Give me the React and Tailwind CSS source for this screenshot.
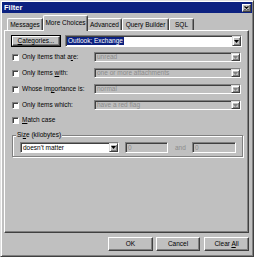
import React from "react";

function Arrow({ disabled }) {
  return (
    <div className="w-[9px] h-full shrink-0 flex items-center justify-center bg-[#c0c0c0] border border-t-[#dfdfdf] border-l-[#dfdfdf] border-r-[#404040] border-b-[#404040] shadow-[inset_1px_1px_0_#fff,inset_-1px_-1px_0_#808080]">
      <svg width="5" height="3" viewBox="0 0 5 3">
        <polygon points="0,0 5,0 2.5,3" fill={disabled ? "#808080" : "#000"} />
      </svg>
    </div>
  );
}

function Check() {
  return (
    <div className="w-[7px] h-[7px] shrink-0 bg-white border border-t-[#808080] border-l-[#808080] border-r-white border-b-white shadow-[inset_1px_1px_0_#404040]" />
  );
}

function Row({ label, value }) {
  return (
    <div className="flex items-center h-[10px]">
      <div className="ml-[1px]">
        <Check />
      </div>
      <div className="w-[72px] ml-[3px] whitespace-nowrap">{label}</div>
      <div className="w-[147px] h-[10px] flex bg-[#c0c0c0] border border-t-[#808080] border-l-[#808080] border-r-white border-b-white shadow-[inset_1px_1px_0_#404040]">
        <div className="flex-1 pl-[2px] flex items-center text-[#8c8c8c] whitespace-nowrap overflow-hidden">{value}</div>
        <Arrow disabled />
      </div>
    </div>
  );
}

export default function App() {
  const raised =
    "bg-[#c0c0c0] border border-t-white border-l-white border-r-[#404040] border-b-[#404040] shadow-[inset_-1px_-1px_0_#808080]";
  return (
    <div className="w-[254px] h-[257px] bg-[#c0c0c0] flex flex-col border border-t-[#dfdfdf] border-l-[#dfdfdf] border-r-[#404040] border-b-[#404040] shadow-[inset_1px_1px_0_#fff,inset_-1px_-1px_0_#808080] p-[1px] font-['Liberation_Sans',Arial,sans-serif] text-[6.5px] leading-[8px] text-black">
      {/* Title bar */}
      <div className="h-[11px] shrink-0 bg-[#0c2180] flex items-center justify-between pl-[2px] pr-[1px]">
        <span className="text-white font-bold text-[7.5px] leading-[9px]">Filter</span>
        <div className={`w-[9px] h-[8px] flex items-center justify-center ${raised}`}>
          <svg width="5" height="4" viewBox="0 0 5 4">
            <path d="M0.5 0.5 L4.5 3.5 M4.5 0.5 L0.5 3.5" stroke="#000" strokeWidth="1.1" />
          </svg>
        </div>
      </div>

      {/* Tabs */}
      <div className="mt-[2px] h-[15px] shrink-0 flex items-end pl-[5px]">
        <div className="w-[36px] h-[12px] flex items-center justify-center border-t border-l border-t-white border-l-white border-r border-r-[#404040] shadow-[inset_-1px_0_0_#808080] rounded-tl-[2px] whitespace-nowrap">
          Messages
        </div>
        <div className="relative z-10 w-[45px] h-[16px] -mb-[1px] bg-[#c0c0c0] flex items-start pt-[3px] justify-center border-t border-l border-t-white border-l-white border-r border-r-[#404040] shadow-[inset_-1px_0_0_#808080] rounded-t-[2px] whitespace-nowrap">
          More Choices
        </div>
        <div className="w-[34px] h-[12px] flex items-center justify-center border-t border-r border-t-white border-r-[#404040] shadow-[inset_-1px_0_0_#808080] rounded-tr-[2px] whitespace-nowrap">
          Advanced
        </div>
        <div className="w-[47px] h-[12px] flex items-center justify-center border-t border-l border-r border-t-white border-l-white border-r-[#404040] shadow-[inset_-1px_0_0_#808080] rounded-t-[2px] whitespace-nowrap">
          Query Builder
        </div>
        <div className="w-[25px] h-[12px] flex items-center justify-center border-t border-l border-r border-t-white border-l-white border-r-[#404040] shadow-[inset_-1px_0_0_#808080] rounded-t-[2px] whitespace-nowrap">
          SQL
        </div>
      </div>

      {/* Panel */}
      <div className="ml-[2px] w-[245px] h-[203px] shrink-0 flex flex-col pl-[6px] pt-[4px] border border-t-white border-l-white border-r-[#404040] border-b-[#404040] shadow-[inset_-1px_-1px_0_#808080]">
        <div className="flex items-center h-[12px]">
          <div className="w-[50px] h-[12px] border border-black">
            <div className={`w-full h-full flex items-center justify-center ${raised}`}>
              <span>
                <u>C</u>ategories...
              </span>
            </div>
          </div>
          <div className="ml-[4px] w-[177px] h-[12px] flex bg-white border border-t-[#808080] border-l-[#808080] border-r-white border-b-white shadow-[inset_1px_1px_0_#404040]">
            <div className="flex-1 flex items-center pl-[1px]">
              <span className="bg-[#0c2180] text-white px-[1px] whitespace-nowrap">Outlook; Exchange</span>
            </div>
            <Arrow />
          </div>
        </div>

        <div className="mt-[5px] flex flex-col gap-[6px]">
          <Row
            label={
              <span>
                Only items that a<u>r</u>e:
              </span>
            }
            value="unread"
          />
          <Row
            label={
              <span>
                Only items <u>w</u>ith:
              </span>
            }
            value="one or more attachments"
          />
          <Row
            label={
              <span>
                Whose im<u>p</u>ortance is:
              </span>
            }
            value="normal"
          />
          <Row label={<span>Only items which:</span>} value="have a red flag" />
        </div>

        <div className="mt-[6px] flex items-center h-[8px]">
          <div className="ml-[1px]">
            <Check />
          </div>
          <span className="ml-[3px]">
            <u>M</u>atch case
          </span>
        </div>

        {/* Group box */}
        <div className="relative mt-[11px] ml-[1px] w-[231px] h-[22px] border border-[#808080] shadow-[1px_1px_0_#fff,inset_1px_1px_0_#fff] pl-[7px] pt-[6px]">
          <span className="absolute left-[3px] -top-[5px] bg-[#c0c0c0] px-[1px]">
            Si<u>z</u>e (kilobytes)
          </span>
          <div className="flex items-center h-[11px]">
            <div className="w-[99px] h-[11px] flex bg-white border border-t-[#808080] border-l-[#808080] border-r-white border-b-white shadow-[inset_1px_1px_0_#404040]">
              <div className="flex-1 flex items-center pl-[2px] whitespace-nowrap">doesn't matter</div>
              <Arrow />
            </div>
            <div className="ml-[6px] w-[43px] h-[11px] flex items-center pl-[2px] text-[#8c8c8c] bg-[#c0c0c0] border border-t-[#808080] border-l-[#808080] border-r-white border-b-white shadow-[inset_1px_1px_0_#404040]">
              0
            </div>
            <span className="ml-[7px] w-[11px] text-[#8c8c8c]">and</span>
            <div className="ml-[6px] w-[44px] h-[11px] flex items-center pl-[2px] text-[#8c8c8c] bg-[#c0c0c0] border border-t-[#808080] border-l-[#808080] border-r-white border-b-white shadow-[inset_1px_1px_0_#404040]">
              0
            </div>
          </div>
        </div>
      </div>

      {/* Buttons */}
      <div className="mt-[4px] flex justify-end pr-[3px]">
        <div className={`w-[45px] h-[14px] flex items-center justify-center ${raised}`}>OK</div>
        <div className={`ml-[3px] w-[44px] h-[14px] flex items-center justify-center ${raised}`}>Cancel</div>
        <div className={`ml-[4px] w-[45px] h-[14px] flex items-center justify-center ${raised}`}>
          <span>
            Clear <u>A</u>ll
          </span>
        </div>
      </div>
    </div>
  );
}
